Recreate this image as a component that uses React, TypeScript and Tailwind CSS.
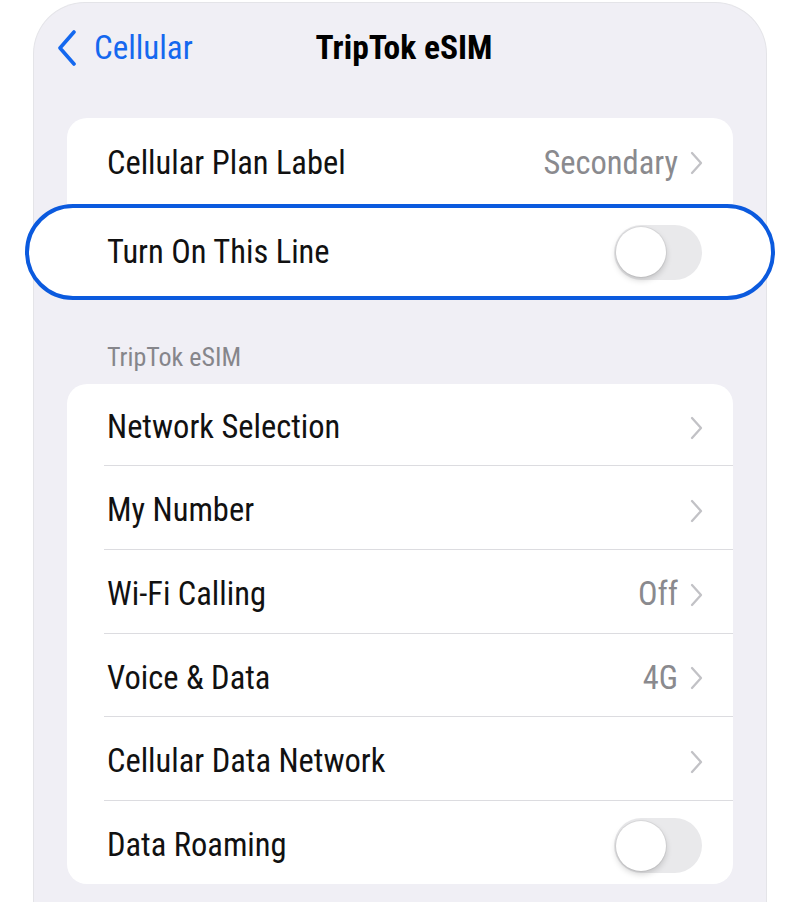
type Row = { label: string; value?: string; toggle?: boolean; h: string };

const ROWS: Row[] = [
  { label: 'Network Selection', h: 'h-[82px]' },
  { label: 'My Number', h: 'h-[84px]' },
  { label: 'Wi-Fi Calling', value: 'Off', h: 'h-[84px]' },
  { label: 'Voice & Data', value: '4G', h: 'h-[83px]' },
  { label: 'Cellular Data Network', h: 'h-[84px]' },
  { label: 'Data Roaming', toggle: true, h: 'h-[83px]' },
];

function Toggle() {
  return (
    <div className="w-[88px] h-[55px] rounded-full bg-[#e9e9eb] p-[2px] flex items-center">
      <div className="w-[50px] h-[50px] rounded-full bg-white shadow-[0_3px_6px_rgba(0,0,0,0.18),0_0_0_1px_rgba(0,0,0,0.05)]" />
    </div>
  );
}

function Trailing({ value }: { value?: string }) {
  return (
    <div className="flex items-center gap-[11px] text-[#8a8a8e]">
      {value && <span>{value}</span>}
      <svg width="14" height="24" viewBox="0 0 14 24" fill="none" stroke="#c2c2c6" strokeWidth="2.3" strokeLinecap="round" strokeLinejoin="round" className="-mr-[2px]">
        <path d="M3 2l9 10-9 10" />
      </svg>
    </div>
  );
}

export default function App() {
  return (
    <div className="min-h-[902px] bg-white pt-[2px] overflow-hidden font-['Roboto_Condensed',Roboto,sans-serif]">
      <div className="ml-[33px] w-[734px] min-h-[900px] rounded-t-[52px] bg-[#f0eff5] border border-[#e4e4e8] border-b-0 px-[33px]">
        {/* nav bar */}
        <div className="h-[90px] flex items-center relative">
          <div className="flex items-center gap-[17px] text-[#1468ef] text-[33px] -ml-[10px]">
            <svg width="20" height="36" viewBox="0 0 20 36" fill="none" stroke="currentColor" strokeWidth="3.6" strokeLinecap="round" strokeLinejoin="round">
              <path d="M17 2L3 18l14 16" />
            </svg>
            <span>Cellular</span>
          </div>
          <div className="absolute left-0 right-0 text-center text-[33.5px] font-bold text-black pointer-events-none pl-[8px]">
            TripTok eSIM
          </div>
        </div>

        {/* first group */}
        <div className="mt-[25px] text-[32.5px] text-[#111]">
          <div className="h-[86px] bg-white rounded-t-[20px] flex items-center justify-between pl-[40px] pr-[32px] pt-[4px]">
            <span>Cellular Plan Label</span>
            <Trailing value="Secondary" />
          </div>
          <div className="-mx-[42px] h-[96px] bg-white rounded-full border-[4px] border-[#0b5ade] flex items-center justify-between pl-[78px] pr-[69px]">
            <span>Turn On This Line</span>
            <Toggle />
          </div>
        </div>

        <div className="mt-[42px] pl-[40px] text-[26px] text-[#86868b] h-[30px] flex items-center">TripTok eSIM</div>

        {/* second group */}
        <div className="mt-[12px] bg-white rounded-[20px] text-[32.5px] text-[#111] overflow-hidden">
          {ROWS.map((r, i) => (
            <div key={r.label} className="pl-[37px]">
              <div
                className={`${r.h} pt-[6px] flex items-center justify-between ${r.toggle ? 'pr-[31px]' : 'pr-[32px]'} ${
                  i < ROWS.length - 1 ? 'border-b border-[#dcdce0]' : ''
                }`}
              >
                <span className="pl-[3px]">{r.label}</span>
                {r.toggle ? <Toggle /> : <Trailing value={r.value} />}
              </div>
            </div>
          ))}
        </div>
      </div>
    </div>
  );
}
